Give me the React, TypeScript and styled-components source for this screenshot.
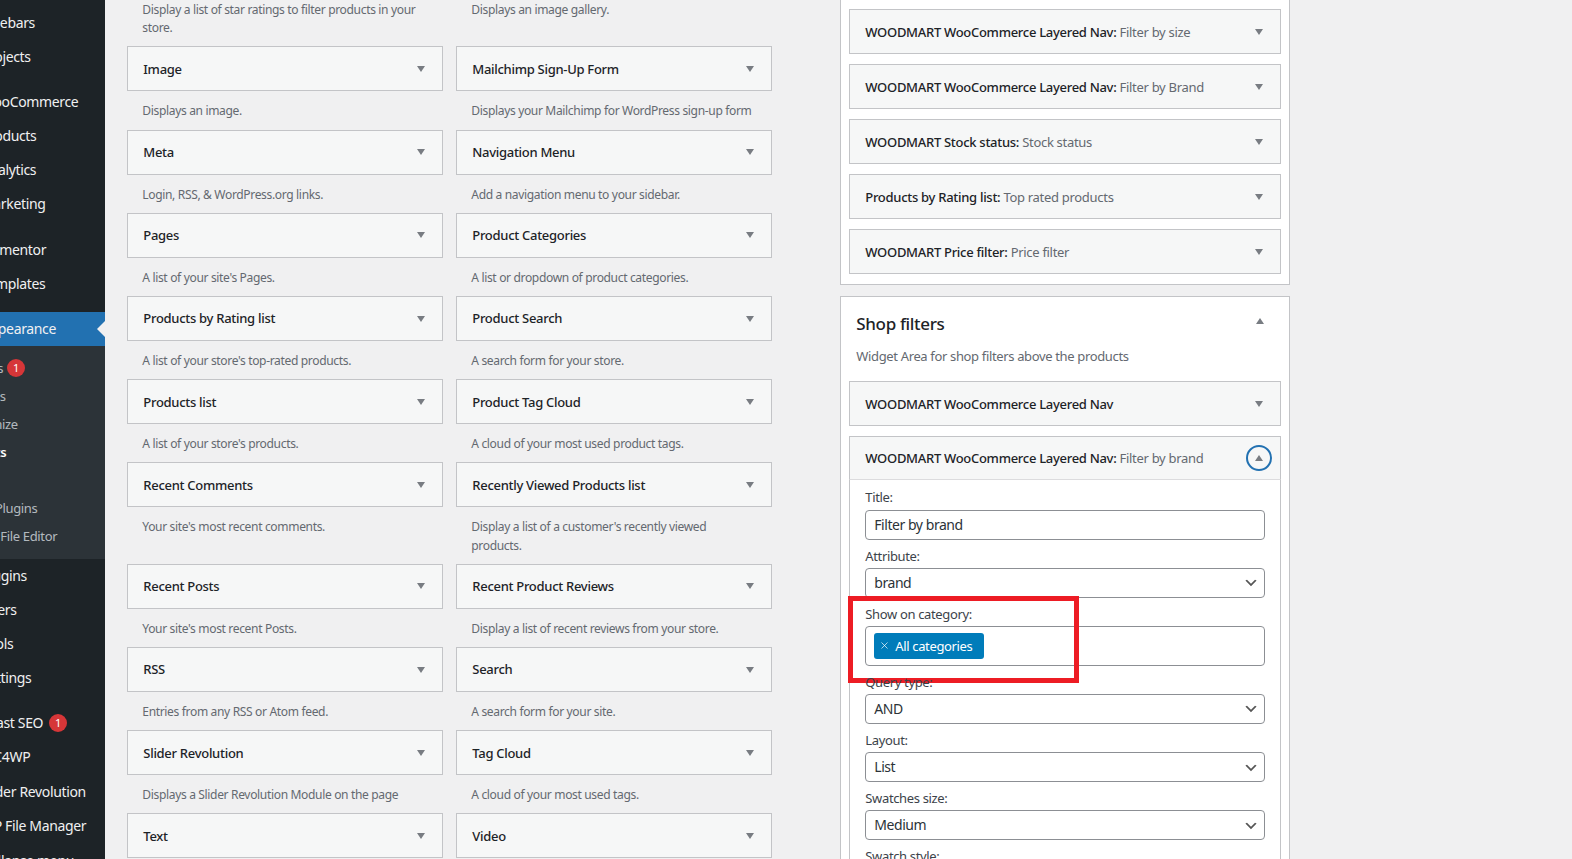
import React from 'react';
import styled, { createGlobalStyle } from 'styled-components';
import { X } from 'lucide-react';

const GlobalStyle = createGlobalStyle`
  html, body {
    margin: 0;
    padding: 0;
    height: 100%;
    overflow: hidden;
    background: #f0f0f1;
  }
  * {
    box-sizing: border-box;
  }
`;

const Page = styled.div`
  display: flex;
  height: 859px;
  overflow: hidden;
  background: #f0f0f1;
  color: #3c434a;
  font-family: 'Noto Sans', 'Open Sans', sans-serif;
  font-size: 13px;
  line-height: 18.2px;
  letter-spacing: -0.35px;
`;

const Sidebar = styled.nav`
  flex: 0 0 105px;
  background: #1d2327;
  overflow: hidden;
`;

const Menu = styled.ul`
  list-style: none;
  width: 160px;
  margin: 0 0 0 -55px;
  padding: 6px 0 0;
`;

const MenuItem = styled.li<{ $current?: boolean; $gap?: number }>`
  position: relative;
  display: flex;
  align-items: center;
  gap: 6px;
  height: 34px;
  margin-top: ${props => props.$gap ?? 0}px;
  padding-left: 36px;
  font-size: 14px;
  white-space: nowrap;
  color: #f0f0f1;
  background: ${props => (props.$current ? '#2271b1' : 'transparent')};

  ${props =>
    props.$current &&
    `
    &::after {
      content: '';
      position: absolute;
      right: 0;
      top: 9px;
      border: 8px solid transparent;
      border-right-color: #f0f0f1;
    }
  `}
`;

const SubMenu = styled.ul`
  list-style: none;
  margin: 0;
  padding: 8px 0 9px;
  background: #2c3338;
`;

const SubItem = styled.li<{ $current?: boolean }>`
  display: flex;
  align-items: center;
  gap: 4px;
  height: 28px;
  padding-left: 12px;
  white-space: nowrap;
  font-weight: ${props => (props.$current ? 600 : 400)};
  color: ${props => (props.$current ? '#ffffff' : 'rgba(240, 246, 252, 0.7)')};
`;

const Badge = styled.span`
  flex: none;
  display: flex;
  align-items: center;
  justify-content: center;
  width: 18px;
  height: 18px;
  border-radius: 50%;
  background: #d63638;
  color: #ffffff;
  font-size: 11px;
  letter-spacing: 0;
`;

const Content = styled.main`
  flex: 1;
  display: flex;
  align-items: flex-start;
  padding-left: 22.3px;
`;

const WidgetGrid = styled.div`
  flex: 0 0 644.4px;
  display: grid;
  grid-template-columns: 1fr 1fr;
  column-gap: 13.6px;
`;

const WidgetTpl = styled.div``;

const WidgetBar = styled.div`
  display: flex;
  align-items: center;
  justify-content: space-between;
  height: 45px;
  padding: 0 17px 0 15px;
  background: #f6f7f7;
  border: 1px solid #c3c4c7;
  color: #1d2327;
  font-weight: 500;
  letter-spacing: -0.29px;
  white-space: nowrap;
`;

const WidgetDesc = styled.p`
  margin: 0;
  padding: 11px 15px 9px;
  font-size: 12.05px;
  color: #646970;
`;

const LeadDesc = styled(WidgetDesc)`
  padding-top: 1px;
`;

const Caret = styled.span<{ $up?: boolean }>`
  flex: none;
  width: 0;
  height: 0;
  border-left: 4px solid transparent;
  border-right: 4px solid transparent;
  ${props => (props.$up ? 'border-bottom' : 'border-top')}: 6px solid #787c82;
`;

const FocusRing = styled.span`
  flex: none;
  display: flex;
  align-items: center;
  justify-content: center;
  width: 26px;
  height: 26px;
  margin-right: -9px;
  border: 2px solid #2271b1;
  border-radius: 50%;
`;

const AreaColumn = styled.div`
  flex: 0 0 450px;
  margin-left: 68.3px;
`;

const Area = styled.section<{ $first?: boolean }>`
  margin: ${props => (props.$first ? '-1px 0 10.6px' : '0')};
  padding: ${props => (props.$first ? '9.4px' : '0')} 8.3px 0;
  background: #ffffff;
  border: 1px solid #c3c4c7;
`;

const AreaHeader = styled.div`
  display: flex;
  justify-content: space-between;
  padding: 15px 17px 0 7px;
`;

const AreaTitle = styled.h2`
  margin: 0 0 10.7px;
  font-size: 17px;
  line-height: 24px;
  font-weight: 500;
  color: #1d2327;
`;

const AreaUpCaret = styled(Caret)`
  margin-top: 6px;
`;

const AreaDesc = styled.p`
  margin: 0 0 16.4px;
  padding-left: 7px;
  color: #646970;
`;

const ChosenWidget = styled.div`
  margin-bottom: 10px;
`;

const WidgetSub = styled.span`
  font-weight: 400;
  letter-spacing: -0.3px;
  color: #646970;
`;

const OpenBar = styled(WidgetBar)`
  height: 44px;
  border-bottom-color: #dcdcde;
`;

const WidgetForm = styled.div`
  padding: 8.2px 15px 0;
  border: 1px solid #c3c4c7;
  border-top: 0;
`;

const Field = styled.div`
  position: relative;
  margin-bottom: 7px;
`;

const FieldLabel = styled.label`
  display: block;
  margin-bottom: 3px;
`;

const TextInput = styled.input`
  display: block;
  width: 100%;
  height: 30px;
  padding: 0 8px;
  border: 1px solid #8c8f94;
  border-radius: 4px;
  background: #ffffff;
  color: #2c3338;
  font: inherit;
  font-size: 14px;
  letter-spacing: -0.45px;
`;

const SelectInput = styled.select`
  display: block;
  width: 100%;
  height: 30px;
  padding: 0 24px 0 8px;
  border: 1px solid #8c8f94;
  border-radius: 4px;
  color: #2c3338;
  font: inherit;
  font-size: 14px;
  letter-spacing: -0.45px;
  appearance: none;
  background: #ffffff
    url("data:image/svg+xml;charset=US-ASCII,%3Csvg%20width%3D%2220%22%20height%3D%2220%22%20xmlns%3D%22http%3A%2F%2Fwww.w3.org%2F2000%2Fsvg%22%3E%3Cpath%20d%3D%22M5%206l5%205%205-5%202%201-7%207-7-7%202-1z%22%20fill%3D%22%23555%22%2F%3E%3C%2Fsvg%3E")
    no-repeat right 5px top 55%;
  background-size: 16px 16px;
`;

const TagBox = styled.div`
  display: flex;
  align-items: center;
  height: 39.5px;
  padding: 0 8px;
  border: 1px solid #8c8f94;
  border-radius: 4px;
  background: #ffffff;
`;

const Tag = styled.span`
  display: flex;
  align-items: center;
  gap: 5px;
  height: 26px;
  padding: 0 12px 0 5px;
  border-radius: 3px;
  background: #007cba;
  color: #ffffff;
`;

const Highlight = styled.div`
  position: absolute;
  left: -17.5px;
  top: -9px;
  width: 231px;
  height: 87px;
  border: 5px solid #ed1c24;
  pointer-events: none;
`;

type MenuEntry = { label: string; gap?: number; badge?: string };

const topItems: MenuEntry[] = [
  { label: 'Sidebars' },
  { label: 'Projects' },
  { label: 'WooCommerce', gap: 11 },
  { label: 'Products' },
  { label: 'Analytics' },
  { label: 'Marketing' },
  { label: 'Elementor', gap: 12 },
  { label: 'Templates' },
];

const subItems = ['Themes', 'Patterns', 'Customize', 'Widgets', 'Menus', 'Install Plugins', 'Theme File Editor'];

const bottomItems: MenuEntry[] = [
  { label: 'Plugins' },
  { label: 'Users' },
  { label: 'Tools' },
  { label: 'Settings' },
  { label: 'Yoast SEO', gap: 11, badge: '1' },
  { label: 'MC4WP' },
  { label: 'Slider Revolution', gap: 1 },
  { label: 'WP File Manager' },
  { label: 'Collapse menu', gap: 1 },
];

const widgetRows: { title: string; desc?: string }[][] = [
  [
    { title: 'Image', desc: 'Displays an image.' },
    { title: 'Mailchimp Sign-Up Form', desc: 'Displays your Mailchimp for WordPress sign-up form' },
  ],
  [
    { title: 'Meta', desc: 'Login, RSS, & WordPress.org links.' },
    { title: 'Navigation Menu', desc: 'Add a navigation menu to your sidebar.' },
  ],
  [
    { title: 'Pages', desc: "A list of your site's Pages." },
    { title: 'Product Categories', desc: 'A list or dropdown of product categories.' },
  ],
  [
    { title: 'Products by Rating list', desc: "A list of your store's top-rated products." },
    { title: 'Product Search', desc: 'A search form for your store.' },
  ],
  [
    { title: 'Products list', desc: "A list of your store's products." },
    { title: 'Product Tag Cloud', desc: 'A cloud of your most used product tags.' },
  ],
  [
    { title: 'Recent Comments', desc: "Your site's most recent comments." },
    { title: 'Recently Viewed Products list', desc: "Display a list of a customer's recently viewed products." },
  ],
  [
    { title: 'Recent Posts', desc: "Your site's most recent Posts." },
    { title: 'Recent Product Reviews', desc: 'Display a list of recent reviews from your store.' },
  ],
  [
    { title: 'RSS', desc: 'Entries from any RSS or Atom feed.' },
    { title: 'Search', desc: 'A search form for your site.' },
  ],
  [
    { title: 'Slider Revolution', desc: 'Displays a Slider Revolution Module on the page' },
    { title: 'Tag Cloud', desc: 'A cloud of your most used tags.' },
  ],
  [{ title: 'Text' }, { title: 'Video' }],
];

const chosenWidgets = [
  ['WOODMART WooCommerce Layered Nav:', 'Filter by size'],
  ['WOODMART WooCommerce Layered Nav:', 'Filter by Brand'],
  ['WOODMART Stock status:', 'Stock status'],
  ['Products by Rating list:', 'Top rated products'],
  ['WOODMART Price filter:', 'Price filter'],
];

const renderMenuEntry = (item: MenuEntry) => (
  <MenuItem key={item.label} $gap={item.gap}>
    {item.label}
    {item.badge && <Badge>{item.badge}</Badge>}
  </MenuItem>
);

export default function App() {
  return (
    <Page>
      <GlobalStyle />
      <Sidebar>
        <Menu>
          {topItems.map(renderMenuEntry)}
          <MenuItem $current $gap={11}>Appearance</MenuItem>
          <SubMenu>
            {subItems.map((label) => (
              <SubItem key={label} $current={label === 'Widgets'}>
                {label}
                {label === 'Themes' && <Badge>1</Badge>}
              </SubItem>
            ))}
          </SubMenu>
          {bottomItems.map(renderMenuEntry)}
        </Menu>
      </Sidebar>

      <Content>
        <WidgetGrid>
          <LeadDesc>Display a list of star ratings to filter products in your store.</LeadDesc>
          <LeadDesc>Displays an image gallery.</LeadDesc>
          {widgetRows.flat().map((widget) => (
            <WidgetTpl key={widget.title}>
              <WidgetBar>
                {widget.title}
                <Caret />
              </WidgetBar>
              {widget.desc && <WidgetDesc>{widget.desc}</WidgetDesc>}
            </WidgetTpl>
          ))}
        </WidgetGrid>

        <AreaColumn>
          <Area $first>
            {chosenWidgets.map(([name, sub]) => (
              <ChosenWidget key={sub}>
                <WidgetBar>
                  <span>
                    {name} <WidgetSub>{sub}</WidgetSub>
                  </span>
                  <Caret />
                </WidgetBar>
              </ChosenWidget>
            ))}
          </Area>

          <Area>
            <AreaHeader>
              <AreaTitle>Shop filters</AreaTitle>
              <AreaUpCaret $up />
            </AreaHeader>
            <AreaDesc>Widget Area for shop filters above the products</AreaDesc>

            <ChosenWidget>
              <WidgetBar>
                WOODMART WooCommerce Layered Nav
                <Caret />
              </WidgetBar>
            </ChosenWidget>

            <OpenBar>
              <span>
                WOODMART WooCommerce Layered Nav: <WidgetSub>Filter by brand</WidgetSub>
              </span>
              <FocusRing>
                <Caret $up />
              </FocusRing>
            </OpenBar>
            <WidgetForm>
              <Field>
                <FieldLabel>Title:</FieldLabel>
                <TextInput defaultValue="Filter by brand" />
              </Field>
              <Field>
                <FieldLabel>Attribute:</FieldLabel>
                <SelectInput defaultValue="brand">
                  <option>brand</option>
                </SelectInput>
              </Field>
              <Field>
                <FieldLabel>Show on category:</FieldLabel>
                <TagBox>
                  <Tag>
                    <X size={11} strokeWidth={1.5} />
                    All categories
                  </Tag>
                </TagBox>
                <Highlight />
              </Field>
              <Field>
                <FieldLabel>Query type:</FieldLabel>
                <SelectInput defaultValue="AND">
                  <option>AND</option>
                </SelectInput>
              </Field>
              <Field>
                <FieldLabel>Layout:</FieldLabel>
                <SelectInput defaultValue="List">
                  <option>List</option>
                </SelectInput>
              </Field>
              <Field>
                <FieldLabel>Swatches size:</FieldLabel>
                <SelectInput defaultValue="Medium">
                  <option>Medium</option>
                </SelectInput>
              </Field>
              <Field>
                <FieldLabel>Swatch style:</FieldLabel>
              </Field>
            </WidgetForm>
          </Area>
        </AreaColumn>
      </Content>
    </Page>
  );
}
